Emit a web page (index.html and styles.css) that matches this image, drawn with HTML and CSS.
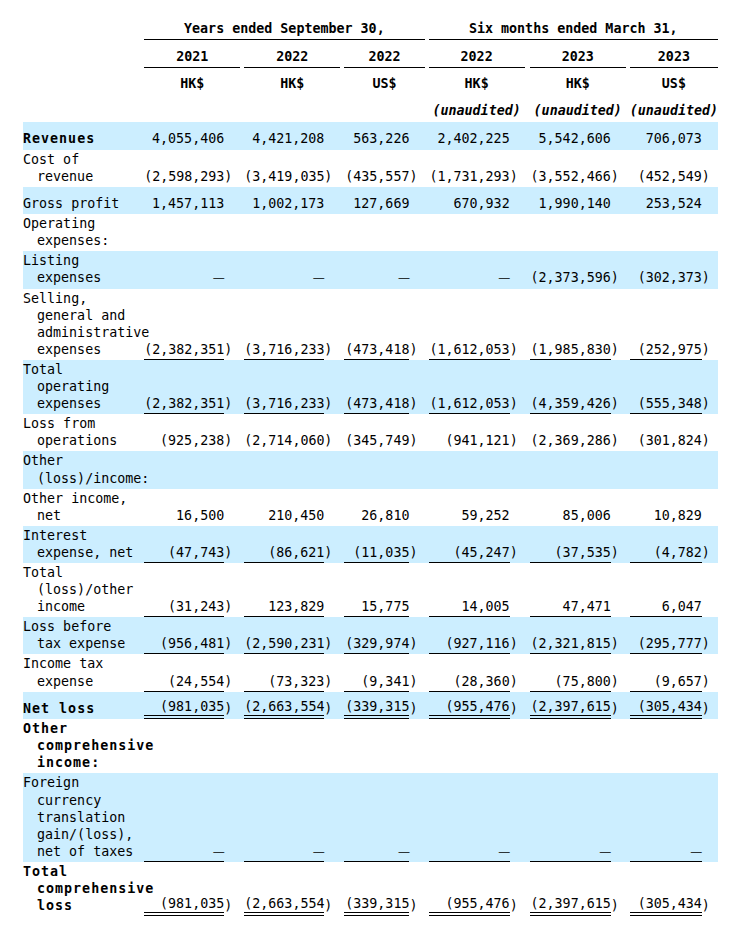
FILE: index.html
```html
<!DOCTYPE html>
<html>
<head>
<meta charset="utf-8">
<link rel="stylesheet" href="styles.css">
</head>
<body>
<div class="page">
<table class="fin">
<colgroup>
<col class="c-lbl">
<col class="c-v1"><col class="c-p16"><col class="c-g4">
<col class="c-v1"><col class="c-p16"><col class="c-g4">
<col class="c-v3"><col class="c-p15"><col class="c-g4">
<col class="c-v4"><col class="c-p15"><col class="c-g5">
<col class="c-v4"><col class="c-p15"><col class="c-g4">
<col class="c-v6"><col class="c-p16">
</colgroup>
<thead>
<tr class="h1">
<td></td>
<td class="hd ul" colspan="8">Years ended September 30,</td>
<td></td>
<td class="hd ul" colspan="8">Six months ended March 31,</td>
</tr>
<tr class="h2">
<td></td>
<td class="hd ul" colspan="2">2021</td><td></td>
<td class="hd ul" colspan="2">2022</td><td></td>
<td class="hd ul" colspan="2">2022</td><td></td>
<td class="hd ul" colspan="2">2022</td><td></td>
<td class="hd ul" colspan="2">2023</td><td></td>
<td class="hd ul" colspan="2">2023</td>
</tr>
<tr class="h3">
<td></td>
<td class="hd" colspan="2">HK$</td><td></td>
<td class="hd" colspan="2">HK$</td><td></td>
<td class="hd" colspan="2">US$</td><td></td>
<td class="hd" colspan="2">HK$</td><td></td>
<td class="hd" colspan="2">HK$</td><td></td>
<td class="hd" colspan="2">US$</td>
</tr>
<tr class="h4">
<td></td>
<td colspan="2"></td><td></td>
<td colspan="2"></td><td></td>
<td colspan="2"></td><td></td>
<td class="hd it" colspan="2">(unaudited)</td><td></td>
<td class="hd it" colspan="2">(unaudited)</td><td></td>
<td class="hd it" colspan="2">(unaudited)</td>
</tr>
</thead>
<tbody>
<tr class="hl">
<td><div class="lbl b">Revenues</div></td>
<td class="n">4,055,406</td><td class="p"></td><td></td>
<td class="n">4,421,208</td><td class="p"></td><td></td>
<td class="n">563,226</td><td class="p"></td><td></td>
<td class="n">2,402,225</td><td class="p"></td><td></td>
<td class="n">5,542,606</td><td class="p"></td><td></td>
<td class="n">706,073</td><td class="p"></td>
</tr>
<tr>
<td><div class="lbl">Cost of<br>revenue</div></td>
<td class="n">(2,598,293</td><td class="p">)</td><td></td>
<td class="n">(3,419,035</td><td class="p">)</td><td></td>
<td class="n">(435,557</td><td class="p">)</td><td></td>
<td class="n">(1,731,293</td><td class="p">)</td><td></td>
<td class="n">(3,552,466</td><td class="p">)</td><td></td>
<td class="n">(452,549</td><td class="p">)</td>
</tr>
<tr class="hl">
<td><div class="lbl">Gross profit</div></td>
<td class="n">1,457,113</td><td class="p"></td><td></td>
<td class="n">1,002,173</td><td class="p"></td><td></td>
<td class="n">127,669</td><td class="p"></td><td></td>
<td class="n">670,932</td><td class="p"></td><td></td>
<td class="n">1,990,140</td><td class="p"></td><td></td>
<td class="n">253,524</td><td class="p"></td>
</tr>
<tr>
<td><div class="lbl">Operating<br>expenses:</div></td>
<td></td><td></td><td></td>
<td></td><td></td><td></td>
<td></td><td></td><td></td>
<td></td><td></td><td></td>
<td></td><td></td><td></td>
<td></td><td></td>
</tr>
<tr class="hl">
<td><div class="lbl">Listing<br>expenses</div></td>
<td class="n"><span class="dash">—</span></td><td class="p"></td><td></td>
<td class="n"><span class="dash">—</span></td><td class="p"></td><td></td>
<td class="n"><span class="dash">—</span></td><td class="p"></td><td></td>
<td class="n"><span class="dash">—</span></td><td class="p"></td><td></td>
<td class="n">(2,373,596</td><td class="p">)</td><td></td>
<td class="n">(302,373</td><td class="p">)</td>
</tr>
<tr class="u">
<td><div class="lbl">Selling,<br>general and<br>administrative<br>expenses</div></td>
<td class="n">(2,382,351</td><td class="p">)</td><td></td>
<td class="n">(3,716,233</td><td class="p">)</td><td></td>
<td class="n">(473,418</td><td class="p">)</td><td></td>
<td class="n">(1,612,053</td><td class="p">)</td><td></td>
<td class="n">(1,985,830</td><td class="p">)</td><td></td>
<td class="n">(252,975</td><td class="p">)</td>
</tr>
<tr class="hl u">
<td><div class="lbl">Total<br>operating<br>expenses</div></td>
<td class="n">(2,382,351</td><td class="p">)</td><td></td>
<td class="n">(3,716,233</td><td class="p">)</td><td></td>
<td class="n">(473,418</td><td class="p">)</td><td></td>
<td class="n">(1,612,053</td><td class="p">)</td><td></td>
<td class="n">(4,359,426</td><td class="p">)</td><td></td>
<td class="n">(555,348</td><td class="p">)</td>
</tr>
<tr>
<td><div class="lbl">Loss from<br>operations</div></td>
<td class="n">(925,238</td><td class="p">)</td><td></td>
<td class="n">(2,714,060</td><td class="p">)</td><td></td>
<td class="n">(345,749</td><td class="p">)</td><td></td>
<td class="n">(941,121</td><td class="p">)</td><td></td>
<td class="n">(2,369,286</td><td class="p">)</td><td></td>
<td class="n">(301,824</td><td class="p">)</td>
</tr>
<tr class="hl">
<td><div class="lbl">Other<br>(loss)/income:</div></td>
<td></td><td></td><td></td>
<td></td><td></td><td></td>
<td></td><td></td><td></td>
<td></td><td></td><td></td>
<td></td><td></td><td></td>
<td></td><td></td>
</tr>
<tr>
<td><div class="lbl">Other income,<br>net</div></td>
<td class="n">16,500</td><td class="p"></td><td></td>
<td class="n">210,450</td><td class="p"></td><td></td>
<td class="n">26,810</td><td class="p"></td><td></td>
<td class="n">59,252</td><td class="p"></td><td></td>
<td class="n">85,006</td><td class="p"></td><td></td>
<td class="n">10,829</td><td class="p"></td>
</tr>
<tr class="hl u">
<td><div class="lbl">Interest<br>expense, net</div></td>
<td class="n">(47,743</td><td class="p">)</td><td></td>
<td class="n">(86,621</td><td class="p">)</td><td></td>
<td class="n">(11,035</td><td class="p">)</td><td></td>
<td class="n">(45,247</td><td class="p">)</td><td></td>
<td class="n">(37,535</td><td class="p">)</td><td></td>
<td class="n">(4,782</td><td class="p">)</td>
</tr>
<tr class="u">
<td><div class="lbl">Total<br>(loss)/other<br>income</div></td>
<td class="n">(31,243</td><td class="p">)</td><td></td>
<td class="n">123,829</td><td class="p"></td><td></td>
<td class="n">15,775</td><td class="p"></td><td></td>
<td class="n">14,005</td><td class="p"></td><td></td>
<td class="n">47,471</td><td class="p"></td><td></td>
<td class="n">6,047</td><td class="p"></td>
</tr>
<tr class="hl u">
<td><div class="lbl">Loss before<br>tax expense</div></td>
<td class="n">(956,481</td><td class="p">)</td><td></td>
<td class="n">(2,590,231</td><td class="p">)</td><td></td>
<td class="n">(329,974</td><td class="p">)</td><td></td>
<td class="n">(927,116</td><td class="p">)</td><td></td>
<td class="n">(2,321,815</td><td class="p">)</td><td></td>
<td class="n">(295,777</td><td class="p">)</td>
</tr>
<tr class="u">
<td><div class="lbl">Income tax<br>expense</div></td>
<td class="n">(24,554</td><td class="p">)</td><td></td>
<td class="n">(73,323</td><td class="p">)</td><td></td>
<td class="n">(9,341</td><td class="p">)</td><td></td>
<td class="n">(28,360</td><td class="p">)</td><td></td>
<td class="n">(75,800</td><td class="p">)</td><td></td>
<td class="n">(9,657</td><td class="p">)</td>
</tr>
<tr class="hl uu">
<td><div class="lbl b">Net loss</div></td>
<td class="n">(981,035</td><td class="p">)</td><td></td>
<td class="n">(2,663,554</td><td class="p">)</td><td></td>
<td class="n">(339,315</td><td class="p">)</td><td></td>
<td class="n">(955,476</td><td class="p">)</td><td></td>
<td class="n">(2,397,615</td><td class="p">)</td><td></td>
<td class="n">(305,434</td><td class="p">)</td>
</tr>
<tr>
<td><div class="lbl b">Other<br>comprehensive<br>income:</div></td>
<td></td><td></td><td></td>
<td></td><td></td><td></td>
<td></td><td></td><td></td>
<td></td><td></td><td></td>
<td></td><td></td><td></td>
<td></td><td></td>
</tr>
<tr class="hl u">
<td><div class="lbl">Foreign<br>currency<br>translation<br>gain/(loss),<br>net of taxes</div></td>
<td class="n"><span class="dash">—</span></td><td class="p"></td><td></td>
<td class="n"><span class="dash">—</span></td><td class="p"></td><td></td>
<td class="n"><span class="dash">—</span></td><td class="p"></td><td></td>
<td class="n"><span class="dash">—</span></td><td class="p"></td><td></td>
<td class="n"><span class="dash">—</span></td><td class="p"></td><td></td>
<td class="n"><span class="dash">—</span></td><td class="p"></td>
</tr>
<tr class="uu">
<td><div class="lbl b">Total<br>comprehensive<br>loss</div></td>
<td class="n">(981,035</td><td class="p">)</td><td></td>
<td class="n">(2,663,554</td><td class="p">)</td><td></td>
<td class="n">(339,315</td><td class="p">)</td><td></td>
<td class="n">(955,476</td><td class="p">)</td><td></td>
<td class="n">(2,397,615</td><td class="p">)</td><td></td>
<td class="n">(305,434</td><td class="p">)</td>
</tr>
</tbody>
</table>
</div>
</body>
</html>
```

FILE: styles.css
```css
body {
  margin: 0;
  background: #ffffff;
  color: #000000;
  font-family: "DejaVu Sans Mono", "Liberation Mono", monospace;
  font-size: 13.33px;
}

.page {
  padding: 12px 0 0 23px;
}

.fin {
  border-collapse: separate;
  border-spacing: 0;
  table-layout: fixed;
  width: 695px;
}

.c-lbl { width: 121px; }
.c-v1 { width: 80px; }
.c-v3 { width: 65px; }
.c-v4 { width: 81px; }
.c-v6 { width: 72px; }
.c-p16 { width: 16px; }
.c-p15 { width: 15px; }
.c-g4 { width: 4px; }
.c-g5 { width: 5px; }

.fin td {
  padding: 1px 0 2px 0;
  line-height: 17.1px;
  vertical-align: bottom;
  white-space: nowrap;
}

.fin thead tr.h1 { height: 28px; }
.fin thead tr.h2 { height: 28px; }
.fin thead tr.h3 { height: 27px; }
.fin thead tr.h4 { height: 27px; }

.fin tbody tr { height: 27.5px; }

.fin td.hd {
  text-align: center;
  font-weight: bold;
  padding-bottom: 3px;
}

.fin td.hd.ul {
  border-bottom: 1px solid #000;
  padding-bottom: 2px;
}

.fin td.it {
  font-style: italic;
}

.hl {
  background: #cceeff;
}

.lbl {
  padding-left: 14px;
  text-indent: -14px;
}

.lbl.b {
  font-weight: bold;
  letter-spacing: 1px;
}

.fin td.n {
  text-align: right;
}

.fin td.p {
  text-align: left;
}

.fin tr.u td.n {
  border-bottom: 1px solid #000;
  padding-bottom: 1px;
}

.fin tr.uu td.n {
  border-bottom: 4px double #000;
  padding-bottom: 0;
}

.dash {
  font-family: "Liberation Sans", sans-serif;
  font-size: 11px;
  vertical-align: 1px;
}
```
